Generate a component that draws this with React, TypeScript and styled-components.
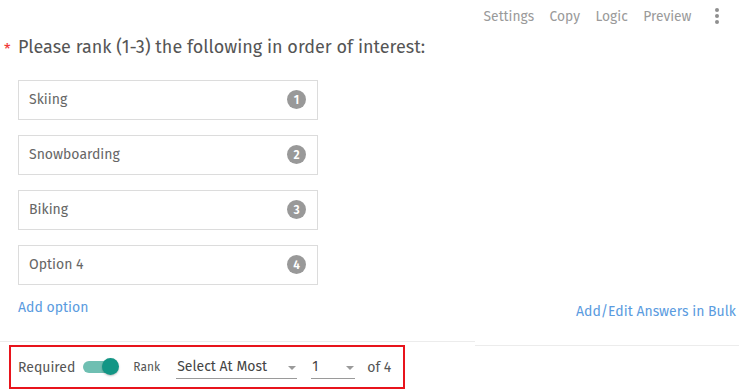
import React from "react";
import styled, { createGlobalStyle } from "styled-components";

const Global = createGlobalStyle`
  html, body { margin: 0; padding: 0; background: #fff; }
  body { font-family: "Fira Sans", Lato, "Noto Sans", sans-serif; }
  * { box-sizing: border-box; }
`;

const Page = styled.div`
  width: 739px;
  height: 390px;
  overflow: hidden;
  background: #fff;
`;

const Toolbar = styled.div`
  display: flex;
  justify-content: flex-end;
  align-items: center;
  height: 32px;
  padding-right: 20px;
  gap: 15.5px;
`;

const ToolLink = styled.span`
  font-size: 13.8px;
  color: #9a9a9a;
`;

const Kebab = styled.span`
  display: flex;
  flex-direction: column;
  gap: 2px;
  margin-left: 8px;
  span {
    width: 4px;
    height: 4px;
    border-radius: 50%;
    background: #8f8f8f;
  }
`;

const Title = styled.div`
  display: flex;
  align-items: center;
  height: 30px;
  padding-left: 4px;
  font-size: 18px;
  color: #555;
`;

const Star = styled.span`
  color: #f03a3a;
  font-size: 15px;
  width: 14px;
  margin-top: 4px;
`;

const Options = styled.div`
  display: flex;
  flex-direction: column;
  gap: 15px;
  padding-left: 18px;
  margin-top: 18px;
`;

const OptionBox = styled.div`
  width: 300px;
  height: 40px;
  border: 1px solid #dcdcdc;
  display: flex;
  align-items: center;
  justify-content: space-between;
  padding: 0 11px 1px 10px;
  font-size: 14px;
  color: #666;
`;

const Badge = styled.span`
  width: 19px;
  height: 19px;
  border-radius: 50%;
  background: #999;
  color: #fff;
  font-size: 12px;
  font-weight: 600;
  display: flex;
  align-items: center;
  justify-content: center;
`;

const LinkRow = styled.div`
  display: flex;
  justify-content: space-between;
  align-items: flex-start;
  padding: 0 3px 0 18px;
  margin-top: 13px;
  height: 28px;
`;

const BlueLink = styled.span<{ $low?: boolean }>`
  font-size: 14px;
  line-height: 20px;
  color: #5a9be0;
  margin-top: ${(p) => (p.$low ? 4 : 0)}px;
`;

const Divider = styled.div`
  display: flex;
  align-items: flex-start;
  margin-top: 15px;
`;

const DivSeg = styled.div<{ $w?: number; $offset: number }>`
  ${(p) => (p.$w ? `width: ${p.$w}px;` : "flex: 1;")}
  height: 1px;
  background: #ececec;
  margin-top: ${(p) => p.$offset}px;
`;

const Footer = styled.div`
  margin: -1px 0 0 9px;
  width: 396px;
  height: 44px;
  border: 2px solid #e8141c;
  display: flex;
  align-items: center;
  padding-left: 7px;
`;

const Label = styled.span<{ $small?: boolean; $ml?: number }>`
  font-size: ${(p) => (p.$small ? 12 : 14)}px;
  color: #555;
  margin-left: ${(p) => p.$ml ?? 0}px;
`;

const Toggle = styled.span`
  position: relative;
  width: 36px;
  height: 20px;
  margin: 0 14px 0 8px;
  display: inline-flex;
  align-items: center;
  &::before {
    content: "";
    width: 34px;
    height: 12px;
    border-radius: 6px;
    background: #6fbfb2;
  }
  &::after {
    content: "";
    position: absolute;
    right: 0;
    top: 1px;
    width: 17px;
    height: 17px;
    border-radius: 50%;
    background: #139685;
    box-shadow: 0 1px 2px rgba(0,0,0,0.25);
  }
`;

const Select = styled.span<{ $w: number; $ml: number }>`
  width: ${(p) => p.$w}px;
  margin-left: ${(p) => p.$ml}px;
  height: 23px;
  border-bottom: 1px solid #9a9a9a;
  display: flex;
  align-items: center;
  justify-content: space-between;
  padding: 0 1px 0 1px;
  font-size: 14px;
  color: #444;
`;

const Caret = styled.span`
  width: 0;
  height: 0;
  border-left: 4px solid transparent;
  border-right: 4px solid transparent;
  border-top: 4px solid #9a9a9a;
  margin-top: 2px;
`;

const options = ["Skiing", "Snowboarding", "Biking", "Option 4"];

export default function App() {
  return (
    <Page>
      <Global />
      <Toolbar>
        <ToolLink>Settings</ToolLink>
        <ToolLink>Copy</ToolLink>
        <ToolLink>Logic</ToolLink>
        <ToolLink>Preview</ToolLink>
        <Kebab>
          <span />
          <span />
          <span />
        </Kebab>
      </Toolbar>
      <Title>
        <Star>*</Star>
        Please rank (1-3) the following in order of interest:
      </Title>
      <Options>
        {options.map((o, i) => (
          <OptionBox key={o}>
            {o}
            <Badge>{i + 1}</Badge>
          </OptionBox>
        ))}
      </Options>
      <LinkRow>
        <BlueLink>Add option</BlueLink>
        <BlueLink $low>Add/Edit Answers in Bulk</BlueLink>
      </LinkRow>
      <Divider>
        <DivSeg $w={475} $offset={0} />
        <DivSeg $offset={4} />
      </Divider>
      <Footer>
        <Label>Required</Label>
        <Toggle />
        <Label $small>Rank</Label>
        <Select $w={121} $ml={16}>
          Select At Most
          <Caret />
        </Select>
        <Select $w={44} $ml={14}>
          1
          <Caret />
        </Select>
        <Label $ml={12}>of 4</Label>
      </Footer>
    </Page>
  );
}
